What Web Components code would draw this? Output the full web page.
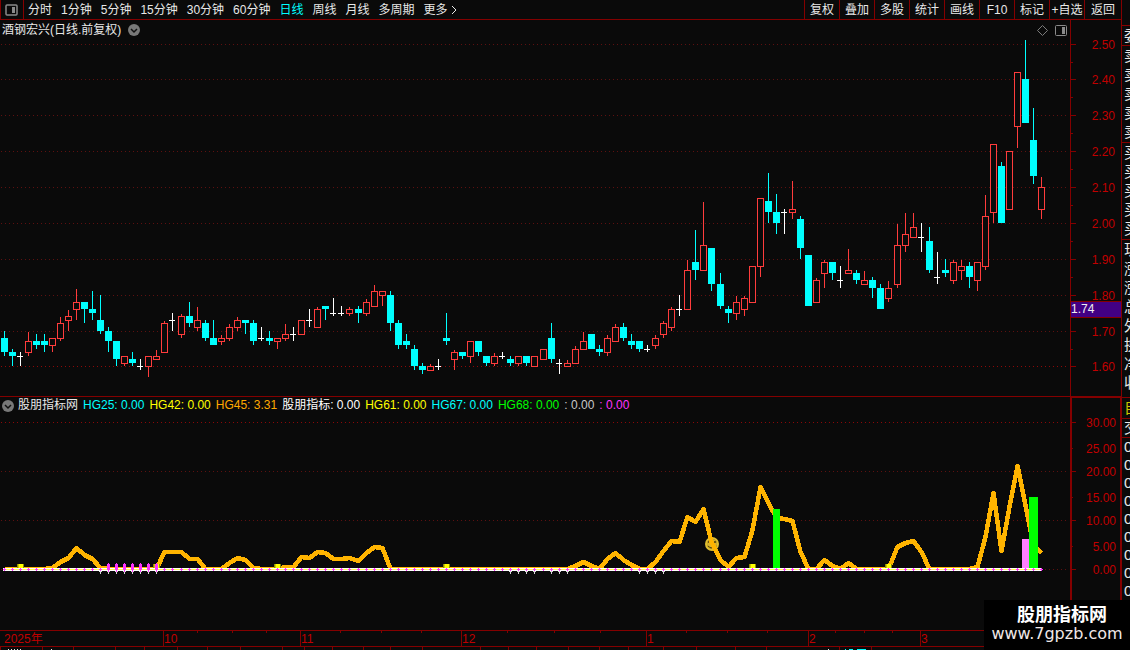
<!DOCTYPE html>
<html lang="zh-CN">
<head>
<meta charset="utf-8">
<title>酒钢宏兴 日线</title>
<style>
  html, body {
    margin: 0;
    height: 100%;
    overflow: hidden;
    background: #0a0a0a;
  }

  body {
    font: 12px/18px "Liberation Sans", "Noto Sans CJK SC", sans-serif;
    color: #e8e8e8;
    --line: #840000;
    --label: #c00000;
  }
</style>
</head>
<body>
<stock-app></stock-app>

<script>
// Candles: [type, bodyTop, bodyBottom, high, low], r = up, c = down, w = flat.
const CANDLES = `
c 338 352 331 356|c 352 356 349 366|w 356 357 352 366|r 341 353 332 356|c 341 345 334 349|c 341 345 334 352
r 338 346 338 352|r 323 339 317 341|r 316 321 310 331|r 302 310 289 320|c 302 309 302 323|c 309 313 291 320
c 320 331 295 334|c 331 341 327 352|c 341 359 341 366|r 356 364 356 366|c 359 363 352 366|w 366 367 359 370
r 356 367 356 377|r 356 360 350 360|r 323 353 321 353|w 320 321 313 331|r 316 335 314 338|c 316 323 302 327
r 320 328 307 331|c 323 338 320 341|c 338 345 320 345|r 338 342 335 345|r 327 339 324 341|r 320 328 317 331
c 320 323 320 334|c 323 341 320 345|w 338 339 327 341|c 338 341 331 345|r 338 342 338 349|r 334 339 324 341
w 334 335 327 341|r 320 335 320 335|w 320 321 309 327|r 309 328 307 328|c 306 309 306 320|w 313 314 298 316
w 313 314 306 316|r 309 314 307 316|c 309 313 306 323|r 302 314 299 316|r 291 307 285 307|r 291 296 291 306
c 295 323 291 331|c 323 345 320 349|c 341 345 334 349|c 349 366 345 370|c 366 370 363 374|r 366 371 364 371
w 366 367 359 370|c 338 341 313 345|r 352 360 350 370|c 352 356 352 359|r 341 357 341 363|c 341 352 341 356
c 356 363 356 366|r 356 364 353 366|w 356 357 352 359|c 359 363 356 366|r 356 364 356 366|c 356 363 356 366
r 356 367 356 367|r 349 360 349 360|c 338 359 323 363|w 363 364 359 374|r 363 367 360 367|r 349 364 346 364
r 341 350 332 350|c 334 349 334 349|c 349 352 345 356|r 338 353 335 356|r 327 342 324 342|c 327 338 323 341
c 341 345 334 349|c 341 349 341 352|w 349 350 345 352|r 338 346 335 349|r 323 335 321 338|r 309 328 307 331
w 309 310 295 316|r 270 310 260 310|c 262 270 230 280|r 245 271 202 271|c 248 284 248 291|c 284 306 273 309
c 309 313 306 323|r 302 314 296 320|r 298 310 296 316|r 266 303 266 303|r 198 267 198 277|c 201 212 173 223
c 212 223 194 234|w 212 213 209 234|r 209 213 181 219|c 219 248 216 259|c 255 306 255 306|r 280 303 278 303
r 262 274 260 288|c 262 273 262 280|w 280 281 266 288|r 270 274 249 274|c 273 280 270 284|r 280 285 271 285
c 280 288 277 298|c 288 309 284 309|r 288 299 281 302|r 245 285 224 288|r 234 246 213 252|r 227 238 213 238
w 237 238 223 252|c 241 270 227 273|w 277 278 252 284|c 270 273 259 277|r 262 281 260 284|r 266 271 260 280
c 266 277 262 288|r 262 281 262 291|r 216 267 195 270|r 144 213 144 223|c 166 223 162 223|r 151 210 151 210
r 72 127 72 148|c 79 123 40 123|c 140 176 108 184|r 187 210 177 219
`.trim().split(/[|\n]/).map(row => {
  const [type, ...values] = row.split(' ')
  return [type, ...values.map(Number)]
})

// Height of the HG45 curve per candle, anything missing sits on the zero line.
const ZERO = 569
const HG45 = {
  6: 568, 7: 562, 8: 558, 9: 548, 10: 555, 11: 559, 12: 568,
  20: 552, 21: 552, 22: 552, 23: 559, 24: 559,
  28: 563, 29: 558, 30: 560, 31: 568,
  35: 567, 36: 567, 37: 557, 38: 558, 39: 552, 40: 553, 41: 559, 42: 559, 43: 558, 44: 561, 45: 553, 46: 547, 47: 548,
  71: 566, 72: 562, 73: 566, 75: 559, 76: 553, 77: 560, 78: 565,
  81: 562, 82: 551, 83: 541, 84: 542, 85: 517, 86: 522, 87: 509, 88: 542, 89: 560, 90: 567, 91: 558, 92: 557,
  93: 530, 94: 487, 95: 503, 96: 518, 97: 519, 98: 521, 99: 552,
  102: 560, 103: 566, 105: 563,
  111: 547, 112: 543, 113: 541, 114: 552, 121: 567, 122: 537, 123: 493, 124: 551, 125: 507, 126: 466, 127: 505, 128: 546, 129: 553
}

const COLORS = { r: '#ff3c3c', c: '#00ffff', w: '#ffffff' }

const rect = (x, y, width, height, fill) =>
  `<rect x="${x}" y="${y}" width="${width}" height="${height}" fill="${fill}"/>`

const range = (from, to) => Array.from({ length: to - from + 1 }, (_, i) => from + i)

/**
 * Base class: holds the svg and redraws it when the window changes.
 */
class ChartElement extends HTMLElement {
  constructor () {
    super()
    this.attachShadow({ mode: 'open' }).innerHTML = `
      <style>
        :host {
          display: block;
          min-width: 0;
          overflow: hidden;
        }

        svg {
          display: block;
          shape-rendering: crispEdges;
        }

        text {
          font-size: 12px;
        }
      </style>
      <svg></svg>
    `
    this.svg = this.shadowRoot.querySelector('svg')
  }

  connectedCallback () {
    this.render()
    window.addEventListener('resize', () => this.render())
  }

  render () {
    const [top, height] = this.span
    const width = this.clientWidth
    this.step = width / 133
    this.svg.setAttribute('width', width)
    this.svg.setAttribute('height', height)
    this.svg.setAttribute('viewBox', `0 ${top} ${width} ${height}`)
    this.svg.innerHTML = this.draw(width)
  }

  x (index) {
    return Math.floor(4.02 + this.step * index)
  }

  dots (y, width, color) {
    return `<path d="M1 ${y + 0.5}H${width - 2}" stroke="${color}" stroke-dasharray="1 3"/>`
  }
}

customElements.define('kline-plot',
  class extends ChartElement {
    span = [40, 356]

    draw (width) {
      const grid = [44, 79, 115, 151, 187, 223, 259, 295, 331, 366]
        .map(y => this.dots(y, width, y === 366 ? '#8c0808' : '#5e1010')).join('')
      return grid + CANDLES.map((candle, i) => this.#candle(candle, this.x(i))).join('')
    }

    #candle ([type, top, bottom, high, low], x) {
      const color = COLORS[type]
      if (type === 'r') {
        return rect(x, high, 1, top - high, color) +
          rect(x, bottom, 1, low - bottom, color) +
          `<rect x="${x - 2.5}" y="${top + 0.5}" width="6" height="${bottom - top - 1}" fill="#0a0a0a" stroke="${color}"/>`
      }
      return rect(x, high, 1, low - high, color) +
        rect(x - 3, top, type === 'w' ? 6 : 7, bottom - top, color)
    }
  }
)

customElements.define('indicator-plot',
  class extends ChartElement {
    span = [415, 215]

    draw (width) {
      const count = CANDLES.length
      const grid = [422, 471, 520, 569].map(y => this.dots(y, width, y === 422 ? '#8c0808' : '#5e1010')).join('')
      const points = range(0, count - 1).map(i => `${this.x(i) + 0.5},${HG45[i] ?? ZERO}`).join(' ')
      const end = this.x(count - 1)

      return grid +
        this.#smiley(this.x(88) + 1, 544) +
        `<polyline points="${points}" fill="none" stroke="#ffb400" stroke-width="4.5" stroke-linejoin="round"/>` +
        rect(this.x(96) - 3, 509, 7, 60, '#00ff00') +
        rect(this.x(127) - 3, 539, 7, 30, '#ff80ff') +
        rect(this.x(128) - 4, 497, 9, 72, '#00ff00') +
        [2, 19, 34, 55, 93, 110].map(i => this.#block(this.x(i))).join('') +
        rect(3, 568, end - 3, 3, '#ffffff') +
        rect(3, 569, end - 3, 1, '#ffff50') +
        range(0, count - 1).map(i => this.#cross(this.x(i))).join('') +
        [...range(12, 19), ...range(63, 66), ...range(68, 70), ...range(79, 82)].map(i => this.#drop(this.x(i))).join('') +
        range(13, 19).map(i => this.#spike(this.x(i))).join('')
    }

    #block (x) {
      return rect(x - 3, 564, 7, 5, '#8c8c00') + rect(x - 2, 564, 5, 5, '#c8c800') + rect(x - 1, 564, 4, 5, '#ffff00')
    }

    #cross (x) {
      return rect(x - 1, 569, 3, 1, '#ff32ff') + rect(x, 568, 1, 3, '#ff32ff')
    }

    #drop (x) {
      return rect(x - 1, 571, 3, 1, '#d8d8d8') + rect(x, 572, 1, 2, '#d8d8d8')
    }

    #spike (x) {
      return rect(x - 1, 564, 3, 6, '#ff32ff') + rect(x, 563, 1, 9, '#ff32ff')
    }

    #smiley (x, y) {
      return `<g shape-rendering="auto">
        <circle cx="${x}" cy="${y}" r="6" fill="#5c4a10" stroke="#e0be30" stroke-width="2"/>
        <circle cx="${x}" cy="${y}" r="5" fill="#d8b42c"/>
        <circle cx="${x - 3}" cy="${y - 2}" r="1" fill="#4a3808"/>
        <circle cx="${x + 3}" cy="${y - 2}" r="1" fill="#4a3808"/>
        <path d="M${x - 4} ${y + 2}q4 4 8 0" fill="none" stroke="#4a3808"/>
      </g>`
    }
  }
)

customElements.define('price-axis',
  class extends ChartElement {
    span = [20, 376]

    draw (width) {
      const marks = [44, 79, 115, 151, 187, 223, 259, 295, 331, 366]
      return rect(0, 20, 1, 376, 'var(--line)') +
        marks.map((y, i) => rect(1, y, 5, 1, 'var(--line)') +
          (i < 9 ? rect(1, y + 18, 2, 1, 'var(--line)') : '') +
          `<text x="${width - 6}" y="${y + 5}" text-anchor="end" fill="var(--label)">${(2.5 - i / 10).toFixed(2)}</text>`).join('') +
        rect(0, 301, width, 17, 'var(--line)') +
        rect(1, 302, width, 15, '#420084') +
        '<text x="1" y="313" fill="#f0f0f0">1.74</text>'
    }
  }
)

customElements.define('indicator-axis',
  class extends ChartElement {
    span = [397, 233]

    draw (width) {
      const marks = [422, 448, 471, 497, 520, 546, 569]
      return rect(0, 397, 2, 233, 'var(--line)') +
        rect(0, 397, width, 1, 'var(--line)') +
        rect(width - 1, 397, 1, 233, 'var(--line)') +
        marks.map((y, i) => rect(2, y, i % 2 ? 1 : 4, 1, 'var(--line)') +
          `<text x="${width - 5}" y="${y + 5}" text-anchor="end" fill="var(--label)">${(30 - i * 5).toFixed(2)}</text>`).join('')
    }
  }
)

customElements.define('time-axis',
  class extends ChartElement {
    span = [630, 20]

    draw (width) {
      const unit = width / 1121
      const months = [[163, '10'], [300, '11'], [461, '12'], [646, '1'], [808, '2'], [920, '3']]
      const ticks = [197, 232, 266, 340, 381, 421, 507, 554, 600, 686, 727, 767, 835, 864, 892]
      const tabs = [0, 42, 73, 115, 144, 177, 207, 240, 282, 304, 332, 363, 390, 422, 480, 508, 536, 568, 599, 628, 663, 696, 735, 766, 839, 871]
      const at = x => Math.round(x * unit)

      return rect(0, 630, width, 1, 'var(--line)') +
        rect(0, 646, width, 1, 'var(--line)') +
        '<text x="4" y="643" fill="var(--label)">2025年</text>' +
        months.map(([x, name]) => rect(at(x), 630, 1, 16, 'var(--line)') +
          `<text x="${at(x) + 1}" y="643" fill="var(--label)">${name}</text>`).join('') +
        ticks.map(x => rect(at(x), 631, 1, 2, 'var(--line)')).join('') +
        tabs.map(x => rect(at(x), 647, 1, 3, 'var(--line)')).join('') +
        [8, 11, 14, 17, 20, 51, 828].map(x => rect(at(x), 649, 1, 1, '#e8e8e8')).join('') +
        rect(at(845), 649, 1, 1, '#00ffff') + rect(at(849), 649, 4, 1, '#00ffff') + rect(at(857), 649, 9, 1, '#00ffff')
    }
  }
)

// Define toolbar template.
const toolbarTemplate = document.createElement('template')
toolbarTemplate.innerHTML = `
  <style>
    :host {
      display: flex;
      justify-content: space-between;
      height: 19px;
      border-bottom: 1px solid var(--line);
    }

    button {
      margin: 0;
      padding: 0;
      border: 0;
      background: none;
      color: inherit;
      font: inherit;
      white-space: nowrap;
    }

    svg {
      display: block;
    }

    .periods, .tools {
      display: flex;
    }

    .periods {
      gap: 9px;
    }

    .layout {
      box-sizing: border-box;
      width: 24px;
      margin-right: -5px;
      padding-left: 4px;
      border: 1px solid var(--line);
      border-width: 0 1px;
    }

    .active {
      color: #00ffff;
    }

    .more {
      display: flex;
      align-items: center;
      gap: 3px;
    }

    .tools button {
      box-sizing: border-box;
      width: 35px;
      border-left: 1px solid var(--line);
    }

    .tools button:last-child {
      width: 37px;
    }
  </style>

  <div class="periods">
    <button class="layout" aria-label="布局">
      <svg width="13" height="12" fill="none" stroke="#8a8a8a"><rect x="1" y="1" width="11" height="10" rx="1" stroke-width="1.5"/><rect x="7" y="3" width="3" height="6" fill="#8a8a8a" stroke="none"/></svg>
    </button>
    <button>分时</button>
    <button>1分钟</button>
    <button>5分钟</button>
    <button>15分钟</button>
    <button>30分钟</button>
    <button>60分钟</button>
    <button class="active">日线</button>
    <button>周线</button>
    <button>月线</button>
    <button>多周期</button>
    <button class="more">更多<svg width="6" height="10" fill="none" stroke="#e8e8e8"><path d="M1 1l4 4-4 4"/></svg></button>
  </div>
  <div class="tools">
    <button>复权</button>
    <button>叠加</button>
    <button>多股</button>
    <button>统计</button>
    <button>画线</button>
    <button>F10</button>
    <button>标记</button>
    <button>+自选</button>
    <button>返回</button>
  </div>
`

customElements.define('tool-bar',
  class extends HTMLElement {
    constructor () {
      super()
      this.attachShadow({ mode: 'open' }).appendChild(toolbarTemplate.content.cloneNode(true))
    }
  }
)

customElements.define('fold-button',
  class extends HTMLElement {
    constructor () {
      super()
      this.attachShadow({ mode: 'open' }).innerHTML = `
        <style>
          :host {
            display: flex;
            align-items: center;
          }

          button {
            padding: 0;
            border: 0;
            background: none;
          }

          svg {
            display: block;
          }
        </style>
        <button aria-label="展开">
          <svg width="12" height="12" fill="none"><circle cx="6" cy="6" r="6" fill="#787878"/><path d="M3 5l3 3 3-3" stroke="#101010" stroke-width="1.5"/></svg>
        </button>
      `
    }
  }
)

customElements.define('chart-title',
  class extends HTMLElement {
    constructor () {
      super()
      this.attachShadow({ mode: 'open' }).innerHTML = `
        <style>
          :host {
            display: flex;
            align-items: center;
            gap: 7px;
            height: 20px;
            padding: 0 3px 0 2px;
            line-height: 20px;
            white-space: nowrap;
          }

          .icons {
            display: flex;
            align-items: center;
            gap: 7px;
            margin-left: auto;
          }
        </style>
        <slot></slot>
        <fold-button></fold-button>
        <div class="icons">
          <svg width="11" height="11" fill="none" stroke="#7c7c7c"><path d="M5.500.5l5 5-5 5-5-5z"/></svg>
          <svg width="12" height="11" fill="none" stroke="#8a8a8a"><rect x=".5" y=".5" width="11" height="10" rx="1"/><rect x="7" y="2" width="3" height="7" fill="#8a8a8a" stroke="none"/></svg>
        </div>
      `
    }
  }
)

customElements.define('indicator-legend',
  class extends HTMLElement {
    constructor () {
      super()
      this.attachShadow({ mode: 'open' }).innerHTML = `
        <style>
          :host {
            display: flex;
            gap: 5px;
            height: 18px;
            padding-left: 2px;
            line-height: 17px;
            white-space: nowrap;
          }

          fold-button {
            margin-right: -1px;
          }
        </style>
        <fold-button></fold-button>
        <slot></slot>
      `
    }
  }
)

customElements.define('quote-strip',
  class extends HTMLElement {
    constructor () {
      super()
      const groups = [
        ['head', ''], ['one', '委'], ['five', '卖卖卖卖卖'], ['five', '买买买买买'],
        ['stats', '现涨涨总外换净收'], ['own', '自'], ['deal', '交'], ['ticks', '000000000']
      ]
      this.attachShadow({ mode: 'open' }).innerHTML = `
        <style>
          :host {
            display: block;
            overflow: hidden;
            border-left: 1px solid var(--line);
            font-size: 15px;
            line-height: 19px;
          }

          div {
            padding-left: 2px;
            border-bottom: 1px solid var(--line);
          }

          span {
            display: block;
            white-space: nowrap;
          }

          .head {
            height: 25px;
          }

          .five {
            padding-bottom: 1px;
          }

          .stats {
            padding-bottom: 5px;
          }

          .own {
            padding-bottom: 1px;
            color: #c8c800;
          }

          .deal, .ticks {
            line-height: 18px;
          }

          .ticks {
            border: 0;
          }
        </style>
        ${groups.map(([name, rows]) => `<div class="${name}">${[...rows].map(row => `<span>${row}</span>`).join('')}</div>`).join('')}
      `
    }
  }
)

customElements.define('site-mark',
  class extends HTMLElement {
    constructor () {
      super()
      this.attachShadow({ mode: 'open' }).innerHTML = `
        <style>
          :host {
            position: absolute;
            right: 0;
            bottom: 0;
            box-sizing: border-box;
            width: 146px;
            height: 50px;
            padding-top: 5px;
            background: #000;
            text-align: center;
          }

          strong {
            display: block;
            padding-left: 10px;
            font-size: 18px;
            line-height: 20px;
            color: #fff;
          }

          a {
            display: block;
            font: 16px/18px "DejaVu Sans", sans-serif;
            color: #f0e8e8;
            text-decoration: none;
          }
        </style>
        <strong>股朋指标网</strong>
        <a href="#">www.7gpzb.com</a>
      `
    }
  }
)

// Define page template.
const appTemplate = document.createElement('template')
appTemplate.innerHTML = `
  <style>
    :host {
      position: relative;
      display: grid;
      grid-template-columns: minmax(0, 1fr) 51px 9px;
      grid-template-rows: 20px auto auto auto;
      align-content: start;
      height: 100vh;
    }

    tool-bar, time-axis {
      grid-column: 1 / 3;
    }

    quote-strip {
      grid-column: 3;
      grid-row: 1 / 5;
    }

    section {
      min-width: 0;
    }

    .kline, price-axis {
      border-bottom: 1px solid var(--line);
    }

    .cyan { color: #00ffff; }
    .yellow { color: #ffff00; }
    .orange { color: #ffa800; }
    .white { color: #ffffff; }
    .green { color: #00ff00; }
    .grey { color: #c8c8c8; }
    .magenta { color: #ff32ff; }
  </style>

  <tool-bar></tool-bar>
  <section class="kline">
    <chart-title><span>酒钢宏兴(日线.前复权)</span></chart-title>
    <kline-plot></kline-plot>
  </section>
  <price-axis></price-axis>
  <section>
    <indicator-legend>
      <span>股朋指标网</span>
      <span class="cyan">HG25: 0.00</span>
      <span class="yellow">HG42: 0.00</span>
      <span class="orange">HG45: 3.31</span>
      <span class="white">股朋指标: 0.00</span>
      <span class="yellow">HG61: 0.00</span>
      <span class="cyan">HG67: 0.00</span>
      <span class="green">HG68: 0.00</span>
      <span class="grey">: 0.00</span>
      <span class="magenta">: 0.00</span>
    </indicator-legend>
    <indicator-plot></indicator-plot>
  </section>
  <indicator-axis></indicator-axis>
  <time-axis></time-axis>
  <quote-strip></quote-strip>
  <site-mark></site-mark>
`

customElements.define('stock-app',
  class extends HTMLElement {
    constructor () {
      super()
      this.attachShadow({ mode: 'open' }).appendChild(appTemplate.content.cloneNode(true))
    }
  }
)
</script>
</body>
</html>
